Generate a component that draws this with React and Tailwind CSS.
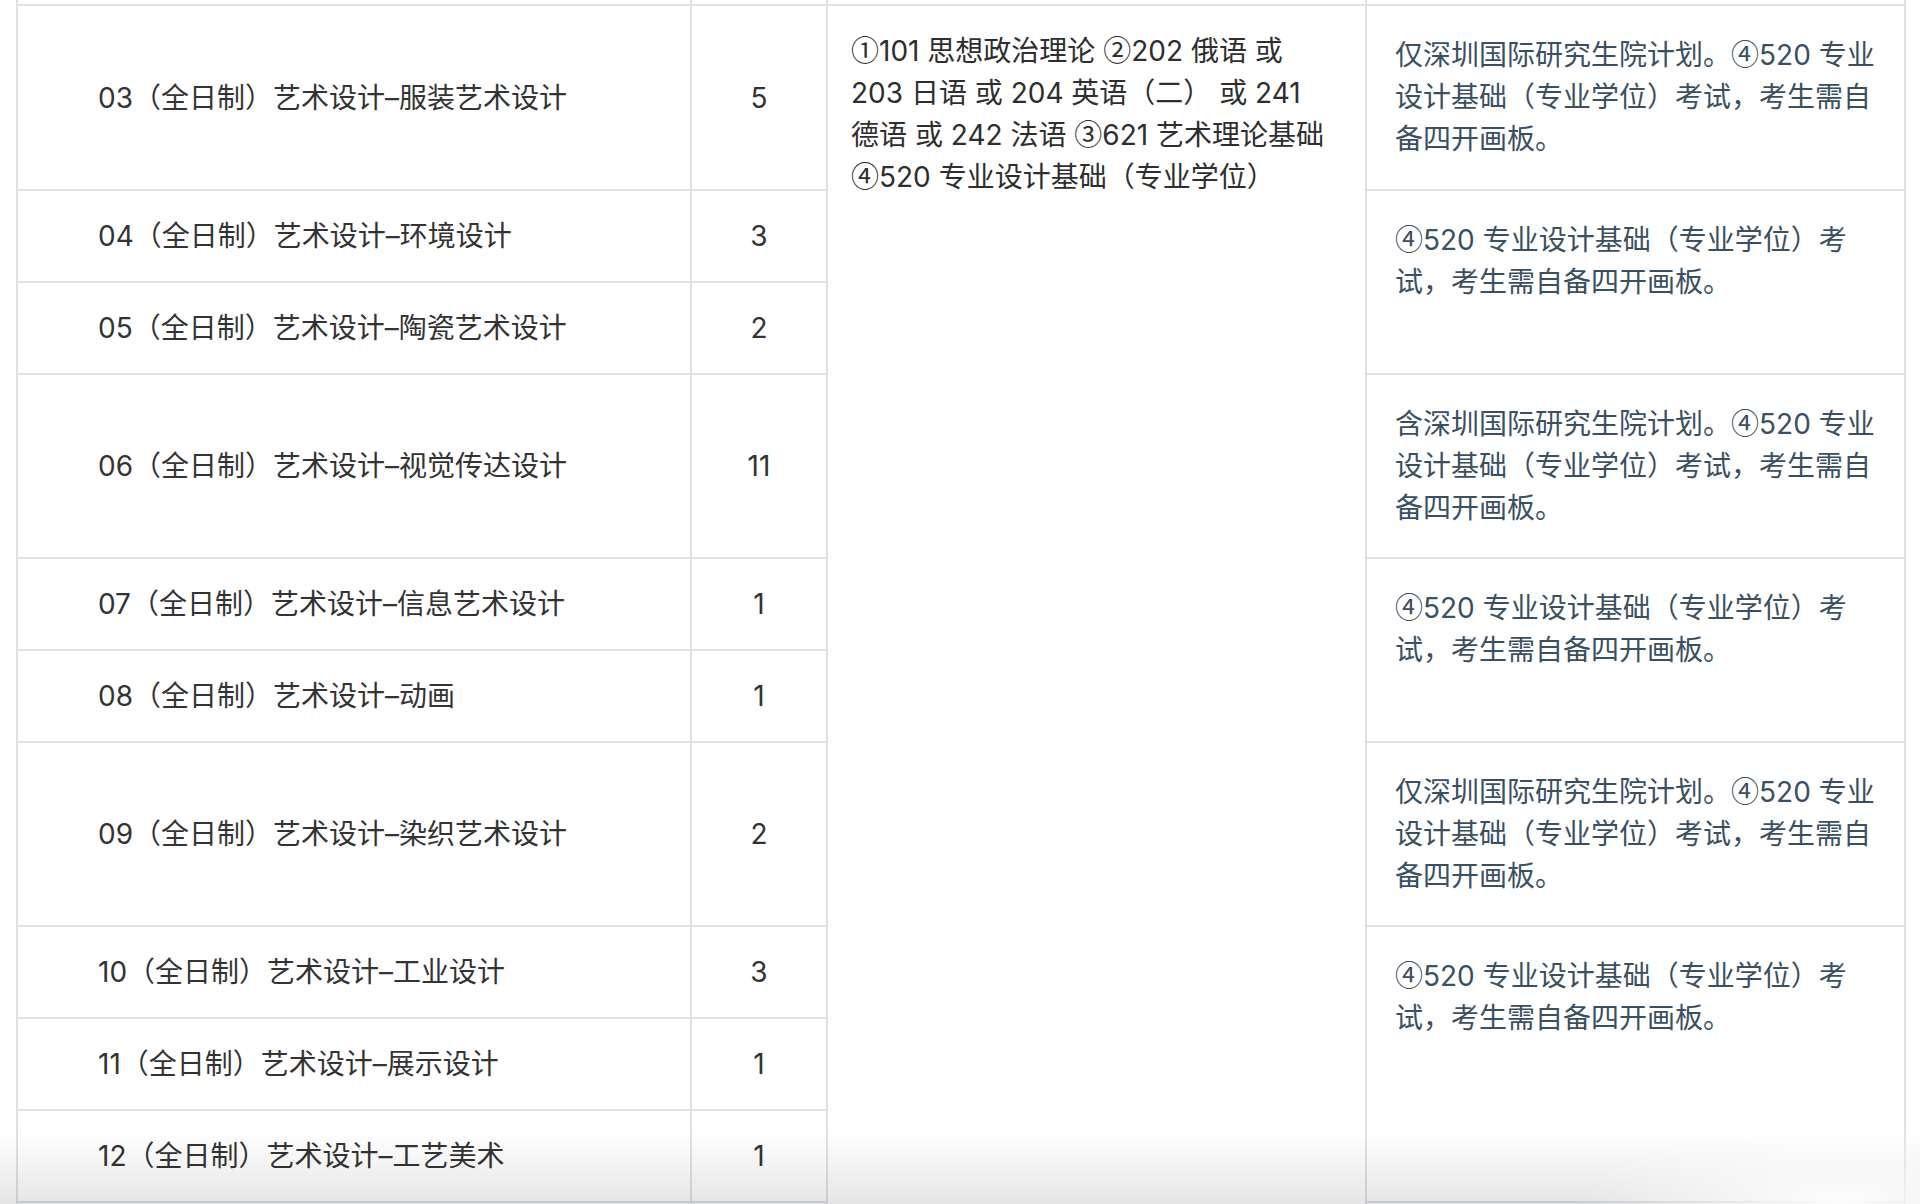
import React from "react";

const FONT = "font-['Inter','Noto_Sans_CJK_SC',sans-serif]";

const majors = [
  { name: "03（全日制）艺术设计–服装艺术设计", n: "5", row: 2 },
  { name: "04（全日制）艺术设计–环境设计", n: "3", row: 3 },
  { name: "05（全日制）艺术设计–陶瓷艺术设计", n: "2", row: 4 },
  { name: "06（全日制）艺术设计–视觉传达设计", n: "11", row: 5 },
  { name: "07（全日制）艺术设计–信息艺术设计", n: "1", row: 6 },
  { name: "08（全日制）艺术设计–动画", n: "1", row: 7 },
  { name: "09（全日制）艺术设计–染织艺术设计", n: "2", row: 8 },
  { name: "10（全日制）艺术设计–工业设计", n: "3", row: 9 },
  { name: "11（全日制）艺术设计–展示设计", n: "1", row: 10 },
  { name: "12（全日制）艺术设计–工艺美术", n: "1", row: 11 },
];

const rowStart = {
  1: "row-start-1",
  2: "row-start-2",
  3: "row-start-3",
  4: "row-start-4",
  5: "row-start-5",
  6: "row-start-6",
  7: "row-start-7",
  8: "row-start-8",
  9: "row-start-9",
  10: "row-start-10",
  11: "row-start-11",
  12: "row-start-12",
};

const onlySz = ["仅深圳国际研究生院计划。④520 专业", "设计基础（专业学位）考试，考生需自", "备四开画板。"];
const inclSz = ["含深圳国际研究生院计划。④520 专业", "设计基础（专业学位）考试，考生需自", "备四开画板。"];
const plain = ["④520 专业设计基础（专业学位）考", "试，考生需自备四开画板。"];

const notes = [
  { lines: onlySz, row: 2, span: "row-span-1" },
  { lines: plain, row: 3, span: "row-span-2" },
  { lines: inclSz, row: 5, span: "row-span-1" },
  { lines: plain, row: 6, span: "row-span-2" },
  { lines: onlySz, row: 8, span: "row-span-1" },
  { lines: plain, row: 9, span: "row-span-3" },
];

// circled numbers are set in the CJK face, as in the source
function Rich({ text }) {
  const parts = text.split(/([①②③④])/);
  return parts.map((p, i) =>
    /[①②③④]/.test(p) ? (
      <span key={i} className="font-['Noto_Sans_CJK_SC',sans-serif] leading-none">
        {p}
      </span>
    ) : (
      <React.Fragment key={i}>{p}</React.Fragment>
    )
  );
}

function Lines({ lines }) {
  return lines.map((l, i) => (
    <span key={i} className="block h-[42px] whitespace-nowrap">
      <Rich text={l} />
    </span>
  ));
}

export default function App() {
  return (
    <div className={`relative w-[1920px] h-[1204px] overflow-hidden bg-white ${FONT}`}>
      <div className="ml-[16px] w-[1890px] grid grid-cols-[672px_134px_537px_537px] grid-rows-[4px_183px_90px_90px_182px_90px_90px_182px_90px_90px_90px_90px] gap-[2px] px-[2px] bg-[#dfe2e5] text-[28px] leading-[42px]">
        {/* stub of the previous row */}
        <div className="col-start-1 row-start-1 bg-white" />
        <div className="col-start-2 row-start-1 bg-white" />
        <div className="col-start-3 row-start-1 bg-white" />
        <div className="col-start-4 row-start-1 bg-white" />

        {majors.map((m) => (
          <React.Fragment key={m.name}>
            <div
              className={`col-start-1 ${rowStart[m.row]} bg-white flex items-center pl-[80px] text-[#333333]`}
            >
              {m.name}
            </div>
            <div
              className={`col-start-2 ${rowStart[m.row]} bg-white flex items-center justify-center text-[#333333]`}
            >
              {m.n}
            </div>
          </React.Fragment>
        ))}

        <div className="col-start-3 row-start-2 row-span-11 bg-white pt-[24px] pl-[23px] text-[#2e2e2e]">
          <Lines
            lines={[
              "①101 思想政治理论 ②202 俄语 或",
              "203 日语 或 204 英语（二） 或 241",
              "德语 或 242 法语 ③621 艺术理论基础",
              "④520 专业设计基础（专业学位）",
            ]}
          />
        </div>

        {notes.map((n, i) => (
          <div
            key={i}
            className={`col-start-4 ${rowStart[n.row]} ${n.span} bg-white pt-[28px] pl-[28px] text-[#3b4f63]`}
          >
            <Lines lines={n.lines} />
          </div>
        ))}

        {/* next row, cut off */}
        <div className="col-start-1 row-start-12 bg-white" />
        <div className="col-start-2 row-start-12 bg-white" />
        <div className="col-start-4 row-start-12 bg-white" />
      </div>

      {/* bottom screen-edge shading */}
      <div className="pointer-events-none absolute inset-x-0 bottom-0 h-[72px] bg-[radial-gradient(ellipse_260px_80px_at_1840px_100%,rgba(255,255,255,0.95)_0%,rgba(255,255,255,0)_100%),linear-gradient(to_bottom,rgba(0,0,0,0)_0%,rgba(0,0,0,0.1)_100%)]" />
    </div>
  );
}
